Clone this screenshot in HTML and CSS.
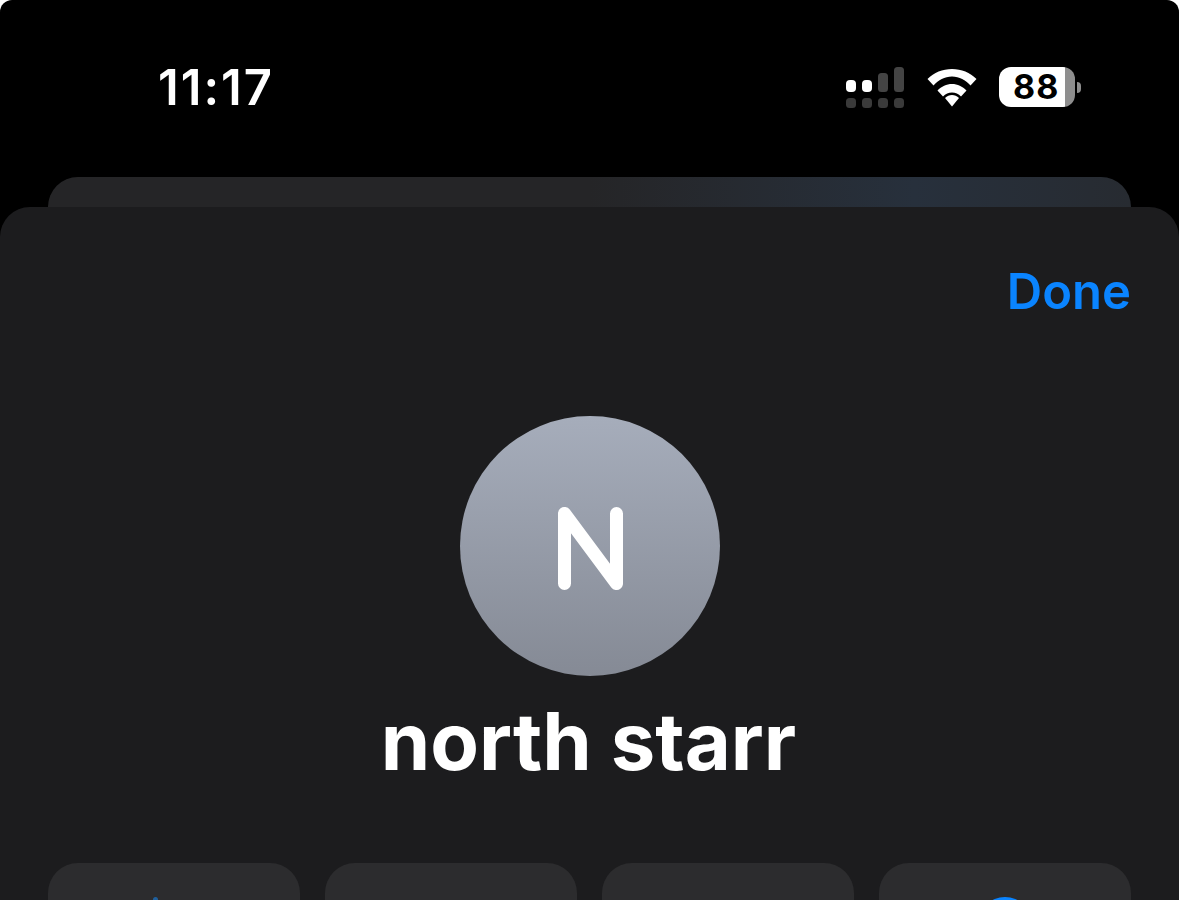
FILE: index.html
```html
<!DOCTYPE html>
<html lang="en">
  <head>
    <meta charset="UTF-8" />
    <title>Contact</title>
    <link rel="stylesheet" href="styles.css">
  </head>
  <body>
    <div id="screen">
      <div class="statusBar">
        <div class="time">11:17</div>
        <div class="statusIcons">
          <svg class="signal" width="58" height="41" viewBox="0 0 58 41">
            <rect x="0" y="13" width="10" height="12" rx="4" fill="#fff" />
            <rect x="16" y="13" width="10" height="12" rx="4" fill="#fff" />
            <rect x="32" y="6" width="10" height="19" rx="3.5" fill="#444" />
            <rect x="48" y="0" width="10" height="25" rx="3.5" fill="#444" />
            <rect x="0" y="31" width="10" height="10" rx="3.5" fill="#3a3a3a" />
            <rect x="16" y="31" width="10" height="10" rx="3.5" fill="#3a3a3a" />
            <rect x="32" y="31" width="10" height="10" rx="3.5" fill="#3a3a3a" />
            <rect x="48" y="31" width="10" height="10" rx="3.5" fill="#3a3a3a" />
          </svg>
          <svg class="wifi" width="50" height="38" viewBox="0 0 50 38">
            <path d="M25 0C15.500 0 7 3.600 .5 10L6.500 16.500C11.500 11 17.500 7.500 25 7.500S38.500 11 43.500 16.500L49.500 10C43 3.600 34.500 0 25 0Z" fill="#fff" />
            <path d="M25 15C19.500 15 14.500 17.500 10.500 21.500L16 27.500C18.500 25 21.500 23.500 25 23.500S31.500 25 34 27.500L39.500 21.500C35.500 17.500 30.500 15 25 15Z" fill="#fff" />
            <path d="M25 26C22.500 26 20 27 18 29L25 37.500L32 29C30 27 27.500 26 25 26Z" fill="#fff" />
          </svg>
          <div class="battery">
            <div class="batteryBody">88</div>
            <div class="batteryNub"></div>
          </div>
        </div>
      </div>
      <div class="backCard"></div>
      <div class="sheet">
        <div class="sheetTop">
          <span class="doneBtn">Done</span>
        </div>
        <div class="avatar">
          <svg class="avatarLetter" width="65" height="83" viewBox="0 0 65 83">
            <path d="M6.500 6.500V76.500M6.500 6.500L58.500 76.500M58.500 6.500V76.500" fill="none" stroke="#fff" stroke-width="13" stroke-linecap="round" stroke-linejoin="round" />
          </svg>
        </div>
        <div class="name">north starr</div>
        <div class="actions">
          <div class="action">
            <div class="iconTip"></div>
          </div>
          <div class="action"></div>
          <div class="action"></div>
          <div class="action">
            <div class="infoDot"></div>
          </div>
        </div>
      </div>
    </div>
  </body>
</html>
```

FILE: styles.css
```css
html,
body {
  margin: 0px;
  padding: 0px;
  background-color: #fff;
}
#screen {
  width: 1179px;
  height: 900px;
  overflow: hidden;
  background-color: #000;
  border-radius: 12px 12px 0 0;
  font-family: Inter, "Liberation Sans", sans-serif;
}
.statusBar {
  display: flex;
  justify-content: space-between;
  align-items: flex-start;
  height: 177px;
  box-sizing: border-box;
  padding: 59px 98px 0 158px;
}
.time {
  font-size: 49px;
  line-height: 58px;
  font-weight: 600;
  color: #fff;
  letter-spacing: 2px;
}
.statusIcons {
  display: flex;
  align-items: flex-start;
  gap: 23px;
  padding-top: 8px;
}
.wifi {
  margin-top: 2px;
  margin-right: -1px;
}
.battery {
  display: flex;
  align-items: center;
}
.batteryBody {
  width: 76px;
  height: 40px;
  border-radius: 12px;
  background: linear-gradient(to right, #fff 66px, #8e8e8e 66px);
  color: #000;
  font-size: 34px;
  line-height: 40px;
  font-weight: 700;
  box-sizing: border-box;
  padding-left: 14px;
  letter-spacing: 1px;
}
.batteryNub {
  width: 4px;
  height: 11px;
  margin-left: 2px;
  border-radius: 0 4px 4px 0;
  background-color: #8e8e8e;
}
.backCard {
  height: 60px;
  margin: 0 48px -30px;
  border-radius: 30px 30px 0 0;
  background: linear-gradient(to right, #252527 0%, #252527 50%, #27303c 80%, #272b31 100%);
}
.sheet {
  position: relative;
  height: 760px;
  border-radius: 30px 30px 0 0;
  background-color: #1c1c1e;
}
.sheetTop {
  display: flex;
  justify-content: flex-end;
  padding: 57px 48px 0;
  height: 152px;
}
.doneBtn {
  font-size: 49px;
  line-height: 56px;
  font-weight: 600;
  color: #0a84ff;
}
.avatar {
  display: flex;
  justify-content: center;
  align-items: center;
  width: 260px;
  height: 260px;
  margin: 0 auto;
  border-radius: 50%;
  background: linear-gradient(to bottom, #a6adbb, #858a95);
}
.avatarLetter {
  margin: 5px 0 0 2px;
}
.name {
  margin-top: 22px;
  padding-right: 2px;
  text-align: center;
  font-size: 79.500px;
  line-height: 86px;
  font-weight: 700;
  color: #fff;
}
.actions {
  display: flex;
  gap: 25px;
  margin: 79px 48px 0;
}
.action {
  flex: 1;
  height: 160px;
  border-radius: 30px;
  background-color: #2c2c2e;
  overflow: hidden;
}
.iconTip {
  width: 5px;
  height: 5px;
  margin: 34px 0 0 105px;
  border-radius: 50% 50% 0 0;
  background-color: #1f5f9c;
}
.infoDot {
  width: 54px;
  height: 54px;
  margin: 34px auto 0;
  border-radius: 50%;
  background-color: #0a84ff;
}
```
